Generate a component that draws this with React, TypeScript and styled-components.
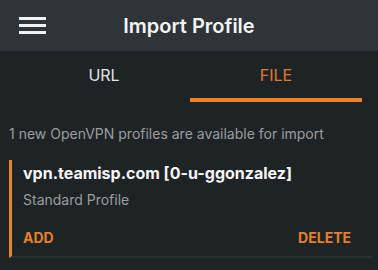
import styled, { createGlobalStyle } from "styled-components";

const GlobalStyle = createGlobalStyle`
  body {
    margin: 0;
    background: #1e2326;
    font-family: Inter, "Noto Sans", sans-serif;
    -webkit-font-smoothing: antialiased;
  }
`;

const Header = styled.header`
  display: grid;
  grid-template-columns: 1fr auto 1fr;
  align-items: center;
  height: 51px;
  padding: 0 19px;
  background: #2e3437;
`;

const MenuButton = styled.button`
  display: flex;
  flex-direction: column;
  gap: 4px;
  width: 27px;
  padding: 0;
  border: 0;
  background: none;
  cursor: pointer;
  justify-self: start;

  span {
    height: 3px;
    background: #f2f2f2;
  }
`;

const Title = styled.h1`
  margin: 0;
  color: #f4f4f4;
  font-size: 20px;
  font-weight: 600;
`;

const Tabs = styled.nav`
  display: flex;
  padding: 0 16px 0 18px;
`;

const Tab = styled.div<{ $active?: boolean }>`
  flex: 1;
  height: 51px;
  box-sizing: border-box;
  padding-top: 14px;
  text-align: center;
  font-size: 16px;
  color: ${(p) => (p.$active ? "#e07b2a" : "#e4e4e4")};
  border-bottom: 4px solid ${(p) => (p.$active ? "#ee8228" : "transparent")};
`;

const Info = styled.p`
  margin: 0;
  padding: 23px 9px 0;
  font-size: 14px;
  color: #9b9d9f;
`;

const Card = styled.div`
  margin: 18px 6px 0 9px;
  padding: 0 21px 10px 11px;
  border-left: 3px solid #ee8228;
  border-bottom: 2px solid #2b3033;
`;

const ProfileName = styled.div`
  font-size: 16px;
  font-weight: 700;
  color: #f6f6f6;
  padding-top: 3px;
`;

const ProfileType = styled.div`
  margin-top: 8px;
  font-size: 14px;
  color: #9b9d9f;
`;

const Actions = styled.div`
  display: flex;
  justify-content: space-between;
  margin-top: 21px;
`;

const ActionButton = styled.button`
  padding: 0;
  border: 0;
  background: none;
  font-family: inherit;
  font-size: 14px;
  font-weight: 700;
  color: #e67f2a;
  cursor: pointer;
`;

export default function App() {
  return (
    <>
      <GlobalStyle />
      <Header>
        <MenuButton aria-label="menu">
          <span />
          <span />
          <span />
        </MenuButton>
        <Title>Import Profile</Title>
      </Header>
      <Tabs>
        <Tab>URL</Tab>
        <Tab $active>FILE</Tab>
      </Tabs>
      <Info>1 new OpenVPN profiles are available for import</Info>
      <Card>
        <ProfileName>vpn.teamisp.com [0-u-ggonzalez]</ProfileName>
        <ProfileType>Standard Profile</ProfileType>
        <Actions>
          <ActionButton>ADD</ActionButton>
          <ActionButton>DELETE</ActionButton>
        </Actions>
      </Card>
    </>
  );
}
